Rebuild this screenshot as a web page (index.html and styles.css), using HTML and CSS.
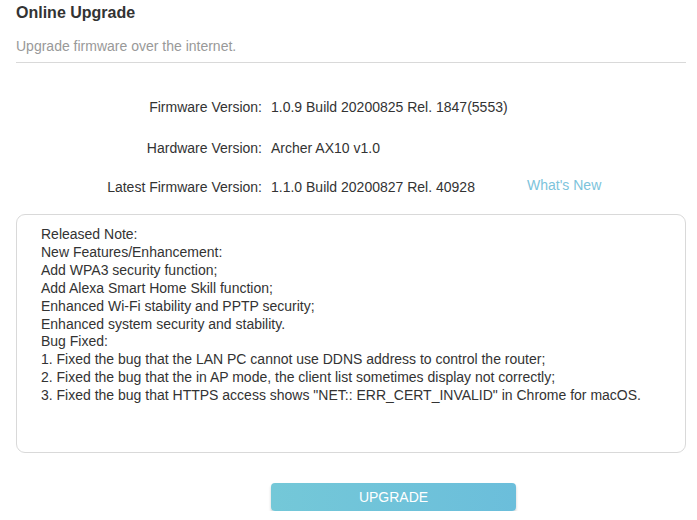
FILE: index.html
```html
<!DOCTYPE html>
<html>
<head>
<meta charset="utf-8">
<link rel="stylesheet" href="styles.css">
</head>
<body>
<div class="page">
  <div class="header">
    <h1 class="title">Online Upgrade</h1>
    <p class="subtitle">Upgrade firmware over the internet.</p>
  </div>
  <div class="rows">
    <div class="row">
      <span class="label">Firmware Version:</span>
      <span class="value">1.0.9 Build 20200825 Rel. 1847(5553)</span>
    </div>
    <div class="row">
      <span class="label">Hardware Version:</span>
      <span class="value">Archer AX10 v1.0</span>
    </div>
    <div class="row row-latest">
      <span class="label">Latest Firmware Version:</span>
      <span class="value">1.1.0 Build 20200827 Rel. 40928</span>
      <a class="link">What's New</a>
    </div>
  </div>
  <div class="notes">
    <div>Released Note:</div>
    <div>New Features/Enhancement:</div>
    <div>Add WPA3 security function;</div>
    <div>Add Alexa Smart Home Skill function;</div>
    <div>Enhanced Wi-Fi stability and PPTP security;</div>
    <div>Enhanced system security and stability.</div>
    <div>Bug Fixed:</div>
    <div>1. Fixed the bug that the LAN PC cannot use DDNS address to control the router;</div>
    <div>2. Fixed the bug that the in AP mode, the client list sometimes display not correctly;</div>
    <div>3. Fixed the bug that HTTPS access shows "NET:: ERR_CERT_INVALID" in Chrome for macOS.</div>
  </div>
  <div class="actions">
    <button class="btn">UPGRADE</button>
  </div>
</div>
</body>
</html>
```
FILE: styles.css
```css
* { box-sizing: border-box; }
html, body { margin: 0; padding: 0; background: #fff; }
body {
  font-family: "Liberation Sans", Arial, sans-serif;
  font-size: 14px;
  color: #333;
}
.page {
  width: 670px;
  margin-left: 16px;
  padding-top: 3px;
}
.header {
  border-bottom: 1px solid #d9d9d9;
  padding-bottom: 6px;
}
.title {
  margin: 0;
  font-size: 16px;
  font-weight: bold;
  line-height: 20px;
  color: #333;
}
.subtitle {
  margin: 13px 0 0;
  line-height: 20px;
  color: #999;
}
.rows {
  margin-top: 34px;
  display: flex;
  flex-direction: column;
  gap: 21px;
}
.row {
  display: flex;
  line-height: 20px;
}
.row-latest { margin-top: -2px; }
.label {
  width: 246px;
  text-align: right;
  flex: none;
}
.value {
  margin-left: 9px;
  width: 256px;
  flex: none;
}
.link {
  color: #7cc3db;
  margin-top: -2px;
  cursor: pointer;
}
.notes {
  margin-top: 17px;
  height: 239px;
  border: 1px solid #d9d9d9;
  border-radius: 9px;
  padding: 11px 24px;
  line-height: 17.9px;
  color: #333;
}
.actions {
  margin-top: 30px;
  padding-left: 255px;
}
.btn {
  width: 245px;
  height: 28px;
  border: none;
  border-radius: 4px;
  background: linear-gradient(90deg, #74c8d8, #6bbedb);
  box-shadow: 0 2px 3px rgba(0,0,0,0.2);
  color: #fff;
  font-family: "Liberation Sans", Arial, sans-serif;
  font-size: 14px;
  padding: 0;
}
```
